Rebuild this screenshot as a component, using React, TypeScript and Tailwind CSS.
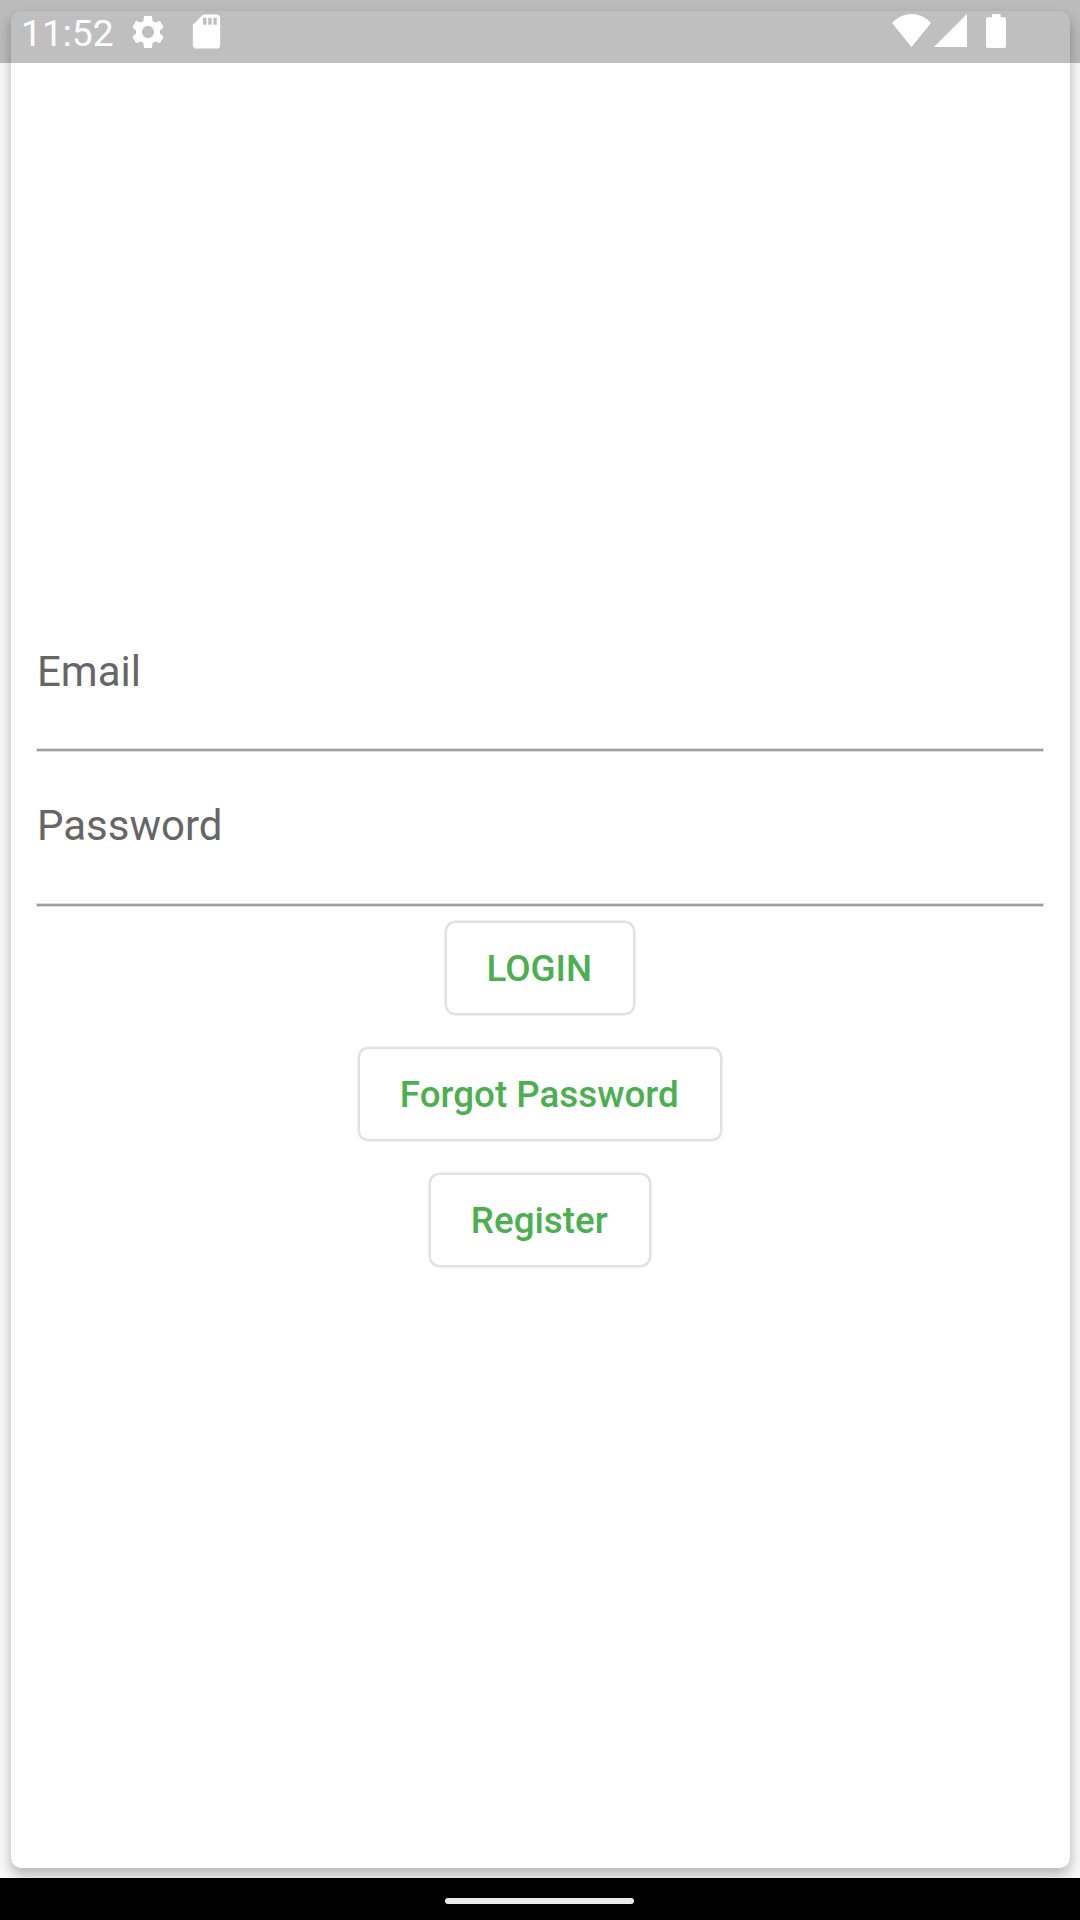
import React from "react";
import { MdSettings, MdSdCard } from "react-icons/md";

function StatusBar() {
  return (
    <header className="absolute inset-x-0 top-0 z-10 flex h-[63px] items-start justify-between bg-black/25 pl-[21px] pr-[74px] text-white">
      <div className="flex items-start">
        <span className="mt-[12px] w-[107px] text-[37.2px] leading-[42px]">11:52</span>
        <MdSettings className="mt-[11.5px] size-[40px]" />
        <MdSdCard className="ml-[17.5px] mt-[11px] size-[41px]" />
      </div>
      <div className="mt-[14px] flex">
        <svg className="h-[34px] w-[39px]" viewBox="0 0 39 34" fill="currentColor">
          <path d="M0 9C5 3.5 12 0 19.5 0S34 3.5 39 9L19.5 33Z" />
        </svg>
        <svg className="ml-[3px] h-[34px] w-[33px]" viewBox="0 0 33 34" fill="currentColor">
          <path d="M0 33 33 0V33Z" />
        </svg>
        <svg className="ml-[19px] h-[34px] w-[20px]" viewBox="0 0 20 34" fill="currentColor">
          <path d="M6 0H14.5V3.3H18.2Q20 3.3 20 5V32.2Q20 34 18.2 34H1.8Q0 34 0 32.2V5Q0 3.3 1.8 3.3H6Z" />
        </svg>
      </div>
    </header>
  );
}

function Field({ label, labelClass }: { label: string; labelClass: string }) {
  return (
    <div className={`flex h-[155px] w-full flex-col justify-between ${labelClass}`}>
      <label className="text-[42px] leading-[49px] text-[#666666]">{label}</label>
      <div className="mb-px h-[2px] bg-[#9e9e9e] shadow-[0_0_0_1px_#dedede]" />
    </div>
  );
}

function OutlineButton({ children }: { children: string }) {
  return (
    <button className="h-[94px] rounded-[10.5px] border-[2px] border-[#e0e0e0] pl-[39.5px] pr-[41px] pt-px text-[36.75px] font-medium leading-[43px] text-[#4caf50] shadow-[0_0_0_0.5px_#e0e0e0]">
      {children}
    </button>
  );
}

export default function App() {
  return (
    <div className="relative flex h-[1920px] w-[1080px] flex-col bg-[#fafafa] font-['Roboto',sans-serif]">
      <StatusBar />
      <div className="flex flex-1 overflow-hidden p-[10.5px]">
        <main className="flex flex-1 flex-col items-center rounded-[10.5px] bg-white px-[26.5px] pt-[586.5px] shadow-[0_7px_14px_0_rgba(0,0,0,0.29)]">
          <Field label="Email" labelClass="pt-[50px]" />
          <Field label="Password" labelClass="pt-[49px]" />
          <div className="mt-[14px] flex flex-col items-center gap-[32px]">
            <OutlineButton>LOGIN</OutlineButton>
            <OutlineButton>Forgot Password</OutlineButton>
            <OutlineButton>Register</OutlineButton>
          </div>
        </main>
      </div>
      <footer className="z-10 flex h-[42px] justify-center bg-black pr-px pt-[20px]">
        <div className="h-[6px] w-[189px] rounded-full bg-[#ebebeb]" />
      </footer>
    </div>
  );
}
